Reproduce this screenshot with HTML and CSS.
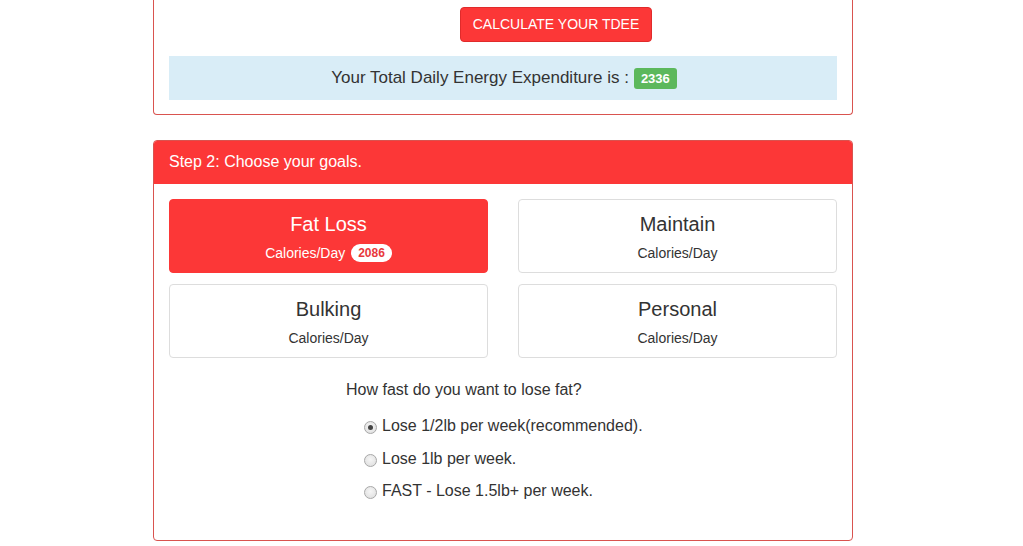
FILE: index.html
```html
<!DOCTYPE html>
<html>
<head>
<meta charset="utf-8">
<link rel="stylesheet" href="styles.css">
</head>
<body>
<div class="wrap">
  <div class="panel panel-top">
    <div class="panel-body top-body">
      <div class="btn-row"><button class="btn-calc">CALCULATE YOUR TDEE</button></div>
      <div class="info">Your Total Daily Energy Expenditure is : <span class="label-green">2336</span></div>
    </div>
  </div>
  <div class="panel panel-goals">
    <div class="panel-heading">Step 2: Choose your goals.</div>
    <div class="panel-body">
      <div class="grid">
        <div class="card active">
          <div class="card-title">Fat Loss</div>
          <div class="card-sub">Calories/Day <span class="badge">2086</span></div>
        </div>
        <div class="card">
          <div class="card-title">Maintain</div>
          <div class="card-sub">Calories/Day</div>
        </div>
        <div class="card">
          <div class="card-title">Bulking</div>
          <div class="card-sub">Calories/Day</div>
        </div>
        <div class="card">
          <div class="card-title">Personal</div>
          <div class="card-sub">Calories/Day</div>
        </div>
      </div>
      <div class="question">
        <div class="q-text">How fast do you want to lose fat?</div>
        <label class="opt"><input type="radio" name="speed" checked> Lose 1/2lb per week(recommended).</label>
        <label class="opt"><input type="radio" name="speed"> Lose 1lb per week.</label>
        <label class="opt"><input type="radio" name="speed"> FAST - Lose 1.5lb+ per week.</label>
      </div>
    </div>
  </div>
</div>
</body>
</html>
```

FILE: styles.css
```css
html, body {
  margin: 0;
  padding: 0;
  background: #fff;
  font-family: "Liberation Sans", Arial, sans-serif;
  color: #333;
  font-size: 14px;
}
.wrap {
  width: 700px;
  margin-left: 153px;
}
.panel {
  border: 1px solid #d9534f;
  border-radius: 4px;
  background: #fff;
  box-sizing: border-box;
}
.panel-top {
  border-top: none;
  border-radius: 0 0 4px 4px;
  margin-top: -10px;
  padding-top: 10px;
}
.top-body {
  padding: 7px 15px 14px;
}
.btn-row {
  display: flex;
  padding-left: 291px;
}
.btn-calc {
  background: #fc3737;
  color: #fff;
  border: 1px solid #e02b2b;
  border-radius: 4px;
  font-family: "Liberation Sans", Arial, sans-serif;
  font-size: 14px;
  width: 192px;
  height: 35px;
  padding: 0;
  line-height: 33px;
}
.info {
  margin-top: 14px;
  background: #d9edf7;
  height: 44px;
  display: flex;
  align-items: center;
  justify-content: center;
  font-size: 17px;
  color: #333;
  padding-left: 2px;
}
.label-green {
  display: inline-block;
  background: #5cb85c;
  color: #fff;
  font-weight: bold;
  font-size: 13px;
  border-radius: 3px;
  padding: 4px 7px 4px;
  margin-left: 5px;
  line-height: 13px;
}
.panel-goals {
  margin-top: 25px;
  overflow: hidden;
  height: 401px;
}
.panel-heading {
  background: #fc3737;
  color: #fff;
  font-size: 16px;
  height: 43px;
  line-height: 42px;
  padding: 0 15px;
}
.panel-goals .panel-body {
  padding: 15px;
}
.grid {
  display: grid;
  grid-template-columns: 319px 319px;
  column-gap: 30px;
  row-gap: 11px;
}
.card {
  border: 1px solid #ddd;
  border-radius: 4px;
  text-align: center;
  padding: 12px 0 9px;
  height: 74px;
  box-sizing: border-box;
}
.card.active {
  background: #fc3737;
  border-color: #fc3737;
  color: #fff;
}
.card-title {
  font-size: 20px;
  line-height: 24px;
}
.card-sub {
  font-size: 14px;
  line-height: 20px;
  margin-top: 7px;
}
.badge {
  display: inline-block;
  background: #fff;
  color: #e8383d;
  font-weight: bold;
  font-size: 12px;
  line-height: 12px;
  border-radius: 10px;
  padding: 3px 7px;
  margin-left: 2px;
  vertical-align: 1px;
}
.question {
  padding-left: 177px;
  padding-top: 21px;
}
.q-text {
  font-size: 16px;
  line-height: 22px;
}
.opt {
  display: flex;
  align-items: center;
  font-size: 16px;
  line-height: 22px;
  margin-top: 11px;
  padding-left: 18px;
}
.opt:first-of-type {
  margin-top: 14px;
}
.opt + .opt {
  margin-top: 11px;
}
.opt:last-of-type {
  margin-top: 10px;
}
.opt input {
  appearance: none;
  -webkit-appearance: none;
  width: 13px;
  height: 13px;
  margin: 2px 5px 0 0;
  border-radius: 50%;
  border: 1px solid #a8a8a8;
  background: radial-gradient(circle at 50% 40%, #f6f6f6 0%, #dcdcdc 100%);
  box-sizing: border-box;
  position: relative;
}
.opt input:checked::after {
  content: "";
  position: absolute;
  left: 3px;
  top: 3px;
  width: 5px;
  height: 5px;
  border-radius: 50%;
  background: #444;
}
```
